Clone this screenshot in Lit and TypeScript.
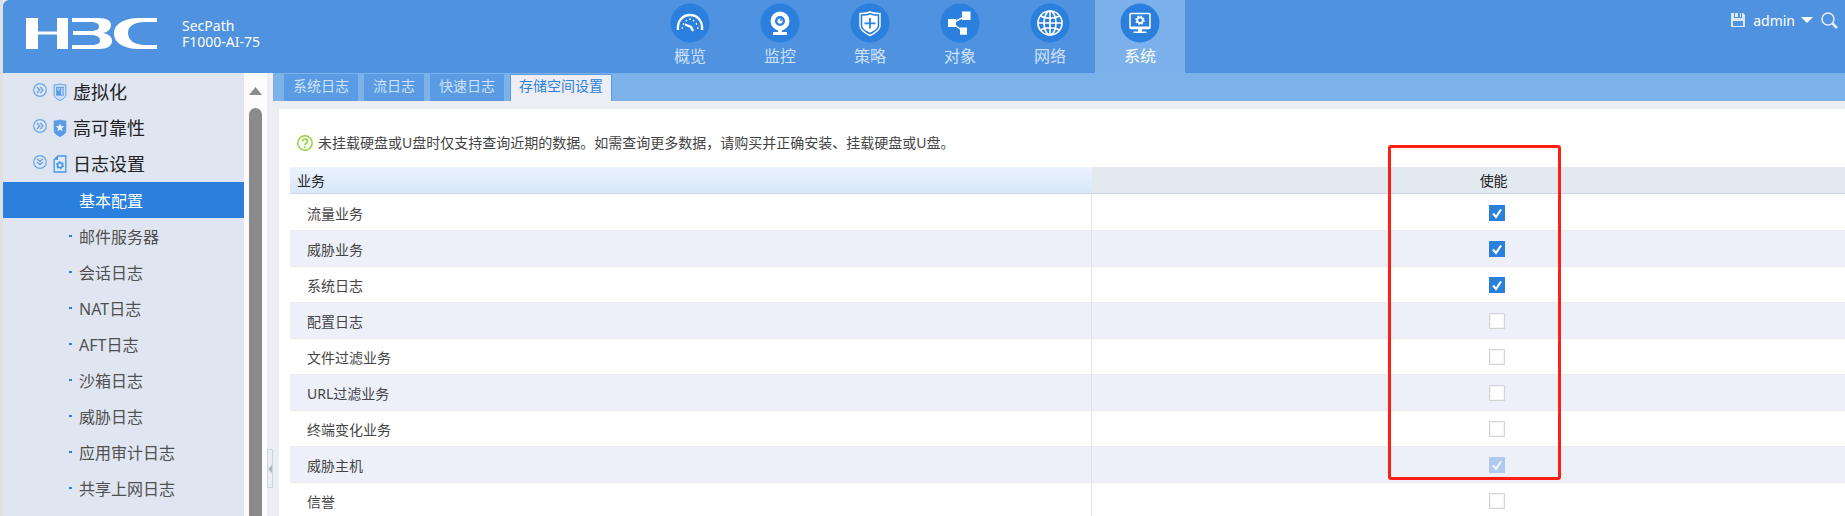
import { LitElement, html, svg, css } from "lit";
import { customElement, state } from "lit/decorators.js";

interface Service {
  name: string;
  enabled: boolean;
  locked?: boolean;
}

const NAV = [
  {
    label: "概览",
    icon: svg`<g fill="none" stroke="#fff"><path d="M8 27C6 7 34 7 32 27" stroke-width="2.4"/><path d="M11.500 25h1.500M13 20.500l1.200.8M16 17l.8 1.200M20 15.500v1.500M24 17l-.8 1.200M27 20.500l-1.200.8M28.500 25H27" stroke-width="1.600"/><path d="M15 21.500l6 2.500 2 4" stroke-width="2.400"/></g>`,
  },
  {
    label: "监控",
    icon: svg`<path fill="#fff" fill-rule="evenodd" d="M20 8.500a9.500 9.500 0 1 1 0 19a9.500 9.500 0 1 1 0-19ZM20 13a5 5 0 1 0 0 10a5 5 0 1 0 0-10Z"/><circle cx="20" cy="18" r="2.600" fill="#fff"/><circle cx="21" cy="17" r="1" fill="#2b7fdd"/><path fill="#fff" d="M18 27h4v2h5v3H13v-3h5Z"/>`,
  },
  {
    label: "策略",
    icon: svg`<path fill="none" stroke="#fff" stroke-width="1.400" d="M20 9c3 1.500 6 1.600 10 1.500v12.500c0 4-5 7-10 9.500c-5-2.500-10-5.500-10-9.500V10.500c4 .1 7 0 10-1.500Z"/><path fill="#fff" d="M20 11.500c2 1 4.500 1.300 7.700 1.300v10c0 3-4 5.200-7.700 7c-3.700-1.800-7.700-4-7.700-7v-10c3.200 0 5.700-.3 7.700-1.300Z"/><path stroke="#2b7fdd" stroke-width="1.800" d="M20 15v10.500M14.500 20.300h11"/>`,
  },
  {
    label: "对象",
    icon: svg`<path d="M26 13L12 20l11 8" fill="none" stroke="#fff" stroke-width="1.400"/><path fill="#fff" d="M22 8.500h8.500V17H22ZM8 16h8v8H8ZM20 24.500h7v7.200h-7Z"/>`,
  },
  {
    label: "网络",
    icon: svg`<g fill="none" stroke="#fff" stroke-width="1.700"><circle cx="20" cy="20" r="12"/><ellipse cx="20" cy="20" rx="6" ry="12"/><path d="M8 20h24M20 8v24M10.500 13c5 3 14 3 19 0M10.500 27c5-3 14-3 19 0"/></g>`,
  },
  {
    label: "系统",
    icon: svg`<rect x="10" y="10.500" width="20" height="15" rx="1" fill="none" stroke="#fff" stroke-width="1.500"/><path d="M10 24.500h20" stroke="#fff" stroke-width="2"/><circle cx="20" cy="17.200" r="2.800" fill="none" stroke="#fff" stroke-width="1.800"/><circle cx="20" cy="17.200" r="4" fill="none" stroke="#fff" stroke-width="1.500" stroke-dasharray="1.570 1.570"/><path fill="#fff" d="M18 26h4v2.500h4.500V30h-13v-1.500H18Z"/>`,
  },
];

const GROUPS = [
  {
    label: "虚拟化",
    open: false,
    icon: svg`<path d="M1 2c3 0 4-.5 6-1c2 .5 3 1 6 1v10c0 3-3 4.500-6 6c-3-1.500-6-3-6-6Z" fill="#cfe1f7" stroke="#5a9ce4"/><path fill="#5a9ce4" d="M3 4h8v9H3Z"/><path d="M4.500 5l1 3 1-3M8.500 5v7M10 5v7" stroke="#dce8f7" fill="none" stroke-width=".8"/>`,
  },
  {
    label: "高可靠性",
    open: false,
    icon: svg`<path d="M1 2c3 0 4-.5 6-1c2 .5 3 1 6 1v10c0 3-3 4.500-6 6c-3-1.500-6-3-6-6Z" fill="#5a9ce4" stroke="#5a9ce4"/><path d="M7 4.500l1.200 2.700 3 .3-2.200 2 .6 3L7 11l-2.600 1.500.6-3-2.200-2 3-.3Z" fill="#e6eefa"/>`,
  },
  {
    label: "日志设置",
    open: true,
    icon: svg`<path d="M5 1h8v16.500H1V5Z" fill="#dfeaf8" stroke="#4a94e4" stroke-width="1.400"/><path d="M5 1v4H1Z" fill="#4a94e4"/><circle cx="7" cy="10.500" r="2.500" fill="none" stroke="#4a94e4" stroke-width="1.600"/><circle cx="7" cy="10.500" r="3.800" fill="none" stroke="#4a94e4" stroke-width="1" stroke-dasharray="2 2"/>`,
  },
];

const LOG_PAGES = [
  "基本配置",
  "邮件服务器",
  "会话日志",
  "NAT日志",
  "AFT日志",
  "沙箱日志",
  "威胁日志",
  "应用审计日志",
  "共享上网日志",
];

const TABS = ["系统日志", "流日志", "快速日志", "存储空间设置"];

@customElement("app-root")
export class AppRoot extends LitElement {
  @state() private services: Service[] = [
    { name: "流量业务", enabled: true },
    { name: "威胁业务", enabled: true },
    { name: "系统日志", enabled: true },
    { name: "配置日志", enabled: false },
    { name: "文件过滤业务", enabled: false },
    { name: "URL过滤业务", enabled: false },
    { name: "终端变化业务", enabled: false },
    { name: "威胁主机", enabled: true, locked: true },
    { name: "信誉", enabled: false },
  ];

  static styles = css`
    :host {
      display: flex;
      flex-direction: column;
      height: 100vh;
      overflow: hidden;
      box-sizing: border-box;
      border-left: 3px solid #dfe0e2;
      background: #edeef4;
      color: #444;
      font-family: "Noto Sans", "Noto Sans CJK SC", sans-serif;
      font-size: 14px;
    }
    * {
      box-sizing: border-box;
    }
    a {
      color: inherit;
      text-decoration: none;
    }
    ul {
      margin: 0;
      padding: 0;
      list-style: none;
    }
    svg {
      display: block;
      flex: none;
    }
    button {
      border: 0;
      padding: 0;
      background: none;
      color: inherit;
      font: inherit;
      cursor: pointer;
    }

    .header {
      flex: none;
      display: grid;
      grid-template-columns: 1fr auto 1fr;
      height: 73px;
      background: #4f92e0;
      color: #fff;
      border-top-left-radius: 6px;
    }
    .brand {
      display: flex;
      align-items: flex-start;
      gap: 25px;
      padding: 18px 0 0 23px;
    }
    .model {
      line-height: 16px;
    }
    .nav {
      display: flex;
      margin-right: 18px;
    }
    .nav-item {
      display: flex;
      flex-direction: column;
      align-items: center;
      gap: 2px;
      width: 90px;
      padding-top: 3px;
      color: #cfe1f7;
      font-size: 16px;
      line-height: 22px;
    }
    .nav-item.active {
      background: #7bb0ea;
      color: #fff;
    }
    .user {
      display: flex;
      justify-content: flex-end;
      align-items: flex-start;
      gap: 8px;
      padding: 10px 7px 0 0;
    }
    .user button {
      display: flex;
      align-items: center;
      gap: 6px;
      height: 20px;
    }

    .body {
      flex: 1;
      min-height: 0;
      display: flex;
    }
    .side {
      flex: none;
      display: flex;
      width: 264px;
    }
    .menu {
      flex: 1;
      padding-top: 1px;
      background: #dfe5f1;
      overflow: hidden;
    }
    .group {
      display: flex;
      align-items: center;
      gap: 6px;
      width: 100%;
      height: 36px;
      padding-left: 30px;
      color: #222;
      font-size: 18px;
      line-height: 36px;
    }
    .group .fold {
      margin-bottom: 4px;
    }
    .page {
      display: flex;
      align-items: center;
      gap: 7px;
      height: 36px;
      padding-left: 66px;
      font-size: 16px;
      color: #505050;
    }
    .page::before {
      content: "";
      width: 3px;
      height: 2px;
      background: #2b7fdd;
    }
    .page.active {
      background: #2b7fdd;
      color: #fff;
    }
    .scroll {
      flex: none;
      display: flex;
      flex-direction: column;
      align-items: center;
      gap: 13px;
      width: 23px;
      padding-top: 14px;
      background: #fcfcfc;
    }
    .thumb {
      width: 13px;
      flex: 1;
      border-radius: 7px 7px 0 0;
      background: #8b8b8b;
    }
    .splitter {
      flex: none;
      display: flex;
      align-items: flex-end;
      width: 6px;
      padding-bottom: 28px;
    }
    .splitter button {
      display: flex;
      align-items: center;
      justify-content: center;
      width: 6px;
      height: 39px;
      border: 1px solid #ccd3ea;
    }

    .main {
      flex: 1;
      min-width: 0;
      display: flex;
      flex-direction: column;
    }
    .tabs {
      flex: none;
      display: flex;
      gap: 6px;
      height: 28px;
      padding: 1px 0 0 11px;
      background: #7bb2ea;
    }
    .tab {
      padding: 0 9px;
      background: #5a9be4;
      color: #cfe2f8;
      line-height: 24px;
    }
    .tab.active {
      padding: 0 8px;
      border: 1px solid #5a9be4;
      border-bottom: 0;
      background: #edeef4;
      color: #2b7fdd;
      line-height: 22px;
    }
    .panel {
      flex: 1;
      min-height: 0;
      margin: 8px 0 0 6px;
      padding: 25px 0 0 11px;
      background: #fff;
      overflow: hidden;
    }
    .hint {
      display: flex;
      align-items: center;
      gap: 5px;
      margin: 0;
      padding-left: 7px;
      height: 18px;
      line-height: 18px;
    }
    .table-area {
      position: relative;
      width: calc(100% + 56px);
      margin-top: 15px;
    }
    table {
      width: 100%;
      border-collapse: separate;
      border-spacing: 0;
      table-layout: fixed;
    }
    th {
      height: 27px;
      padding: 2px 6px 0 0;
      border-bottom: 1px solid #ccd6ea;
      background: #e2e9ef;
      color: #222;
      font-weight: 400;
      line-height: 24px;
    }
    th:first-child {
      width: 49.8%;
      padding-left: 7px;
      text-align: left;
      background: linear-gradient(#ebf3fe, #d9e7f9);
    }
    td {
      height: 36px;
      padding: 0;
      border-top: 1px solid #ebebeb;
      text-align: center;
    }
    tr:first-child td {
      border-top-color: transparent;
    }
    td:first-child {
      padding-left: 17px;
      border-right: 1px solid #e2e4ea;
      text-align: left;
    }
    tbody tr:nth-child(even) {
      background: #edf0f9;
    }
    input {
      appearance: none;
      display: block;
      width: 16px;
      height: 16px;
      margin: 0 auto;
      border: 1px solid #d4d4d4;
      background: #fff;
      box-shadow: inset 0 0 0 1px #f4f4f4;
    }
    input:checked {
      border-color: #2b7fdd;
      background: #2b7fdd
        url("data:image/svg+xml,%3Csvg xmlns='http://www.w3.org/2000/svg' viewBox='0 0 14 14'%3E%3Cpath d='M3 7.500L6 11L11 3.500' fill='none' stroke='%23fff' stroke-width='2.200'/%3E%3C/svg%3E");
      box-shadow: none;
    }
    input:disabled {
      opacity: 0.32;
    }
    .highlight {
      position: absolute;
      top: -22px;
      left: calc(68% + 3px);
      width: 173px;
      height: 335px;
      border: 3px solid #ff1e12;
      border-radius: 3px;
      pointer-events: none;
    }
  `;

  private toggle(index: number, e: Event) {
    const enabled = (e.target as HTMLInputElement).checked;
    this.services = this.services.map((s, i) => (i === index ? { ...s, enabled } : s));
  }

  private renderHeader() {
    return html`
      <header class="header">
        <div class="brand">
          <svg width="131" height="31" viewBox="0 0 131 31" role="img" aria-label="H3C" fill="#fff">
            <path d="M0 0h12v13.500h19V0h11v31H31V16.500H12V31H0Z" />
            <path d="M46 0h27c8 0 12 3 12 7c0 4-3 7-8 8c6 1 9 4 9 8c0 5-5 8-13 8H46v-4h19c6 0 9-1.500 9-4.500c0-4-4-5.500-10-5.500H47v-4h17c6 0 9-1.500 9-4.500S70 4 64 4H46Z" />
            <path d="M131 0v4h-12c-11 0-17 4-17 11s6 12 17 12h12v4h-17c-16 0-26-6-26-15.500S98 0 114 0Z" />
          </svg>
          <div class="model">SecPath<br />F1000-AI-75</div>
        </div>
        <nav class="nav">
          ${NAV.map(
            (item) => html`
              <a class="nav-item ${item.label === "系统" ? "active" : ""}" href="#">
                <svg width="40" height="40" viewBox="0 0 40 40" aria-hidden="true">
                  <circle cx="20" cy="20" r="19.500" fill="#2b7fdd" />
                  ${item.icon}
                </svg>
                ${item.label}
              </a>
            `,
          )}
        </nav>
        <div class="user">
          <button aria-label="保存">
            <svg width="14" height="14" viewBox="0 0 14 14">
              <path d="M0 0h12l2 2v12H0Z" fill="#dbe9fa" />
              <path d="M3 0h8v5H3ZM2 8h10v5H2Z" fill="#4f92e0" />
              <path d="M4 0h3v4H4ZM9 0h1v4H9Z" fill="#dbe9fa" />
            </svg>
          </button>
          <button>
            admin
            <svg width="12" height="6" viewBox="0 0 12 6"><path d="M0 0h12L6 6Z" fill="#fff" /></svg>
          </button>
          <button aria-label="搜索">
            <svg width="17" height="17" viewBox="0 0 17 17" fill="none" stroke="#e4effc">
              <circle cx="7" cy="7" r="6" stroke-width="1.500" />
              <path d="M11.500 11.500l4.500 4.500" stroke-width="2.500" />
            </svg>
          </button>
        </div>
      </header>
    `;
  }

  private renderSide() {
    return html`
      <aside class="side">
        <nav class="menu">
          ${GROUPS.map(
            (g) => html`
              <button class="group" aria-expanded=${g.open}>
                <svg class="fold" width="14" height="14" viewBox="0 0 14 14" fill="none" stroke="#6aa5e6">
                  <circle cx="7" cy="7" r="6.300" stroke-width="1.200" />
                  ${g.open
                    ? svg`<path d="M4 3.800L7 6.300l3-2.500M4 7L7 9.500 10 7" stroke-width="1.400" />`
                    : svg`<path d="M4 4l2.600 3L4 10M7.300 4l2.600 3-2.600 3" stroke-width="1.400" />`}
                </svg>
                <svg width="14" height="18" viewBox="0 0 14 18.500">${g.icon}</svg>
                ${g.label}
              </button>
            `,
          )}
          <ul>
            ${LOG_PAGES.map((p, i) => html`<li><a class="page ${i === 0 ? "active" : ""}" href="#">${p}</a></li>`)}
          </ul>
        </nav>
        <div class="scroll" aria-hidden="true">
          <svg width="13" height="8" viewBox="0 0 13 8"><path d="M6.500 0L13 8H0Z" fill="#8b8b8b" /></svg>
          <div class="thumb"></div>
        </div>
      </aside>
    `;
  }

  render() {
    return html`
      ${this.renderHeader()}
      <div class="body">
        ${this.renderSide()}
        <div class="splitter">
          <button aria-label="收起菜单">
            <svg width="4" height="8" viewBox="0 0 4 8"><path d="M4 0v8L0 4Z" fill="#b4b6bd" /></svg>
          </button>
        </div>
        <main class="main">
          <nav class="tabs">
            ${TABS.map((t, i) => html`<a class="tab ${i === 3 ? "active" : ""}" href="#">${t}</a>`)}
          </nav>
          <section class="panel">
            <p class="hint">
              <svg width="16" height="16" viewBox="0 0 16 16" fill="none" stroke="#92d13c" aria-hidden="true">
                <circle cx="8" cy="8" r="7.200" stroke-width="1.500" />
                <path d="M5.500 6.500C5.500 3.200 10.500 3.200 10.500 6.200C10.500 8 8 8 8 10M8 11.300v1.700" stroke-width="1.700" />
              </svg>
              未挂载硬盘或U盘时仅支持查询近期的数据。如需查询更多数据，请购买并正确安装、挂载硬盘或U盘。
            </p>
            <div class="table-area">
              <table>
                <thead>
                  <tr>
                    <th scope="col">业务</th>
                    <th scope="col">使能</th>
                  </tr>
                </thead>
                <tbody>
                  ${this.services.map(
                    (s, i) => html`
                      <tr>
                        <td><label for="service-${i}">${s.name}</label></td>
                        <td>
                          <input
                            id="service-${i}"
                            type="checkbox"
                            .checked=${s.enabled}
                            ?disabled=${!!s.locked}
                            @change=${(e: Event) => this.toggle(i, e)}
                          />
                        </td>
                      </tr>
                    `,
                  )}
                </tbody>
              </table>
              <div class="highlight"></div>
            </div>
          </section>
        </main>
      </div>
    `;
  }
}
